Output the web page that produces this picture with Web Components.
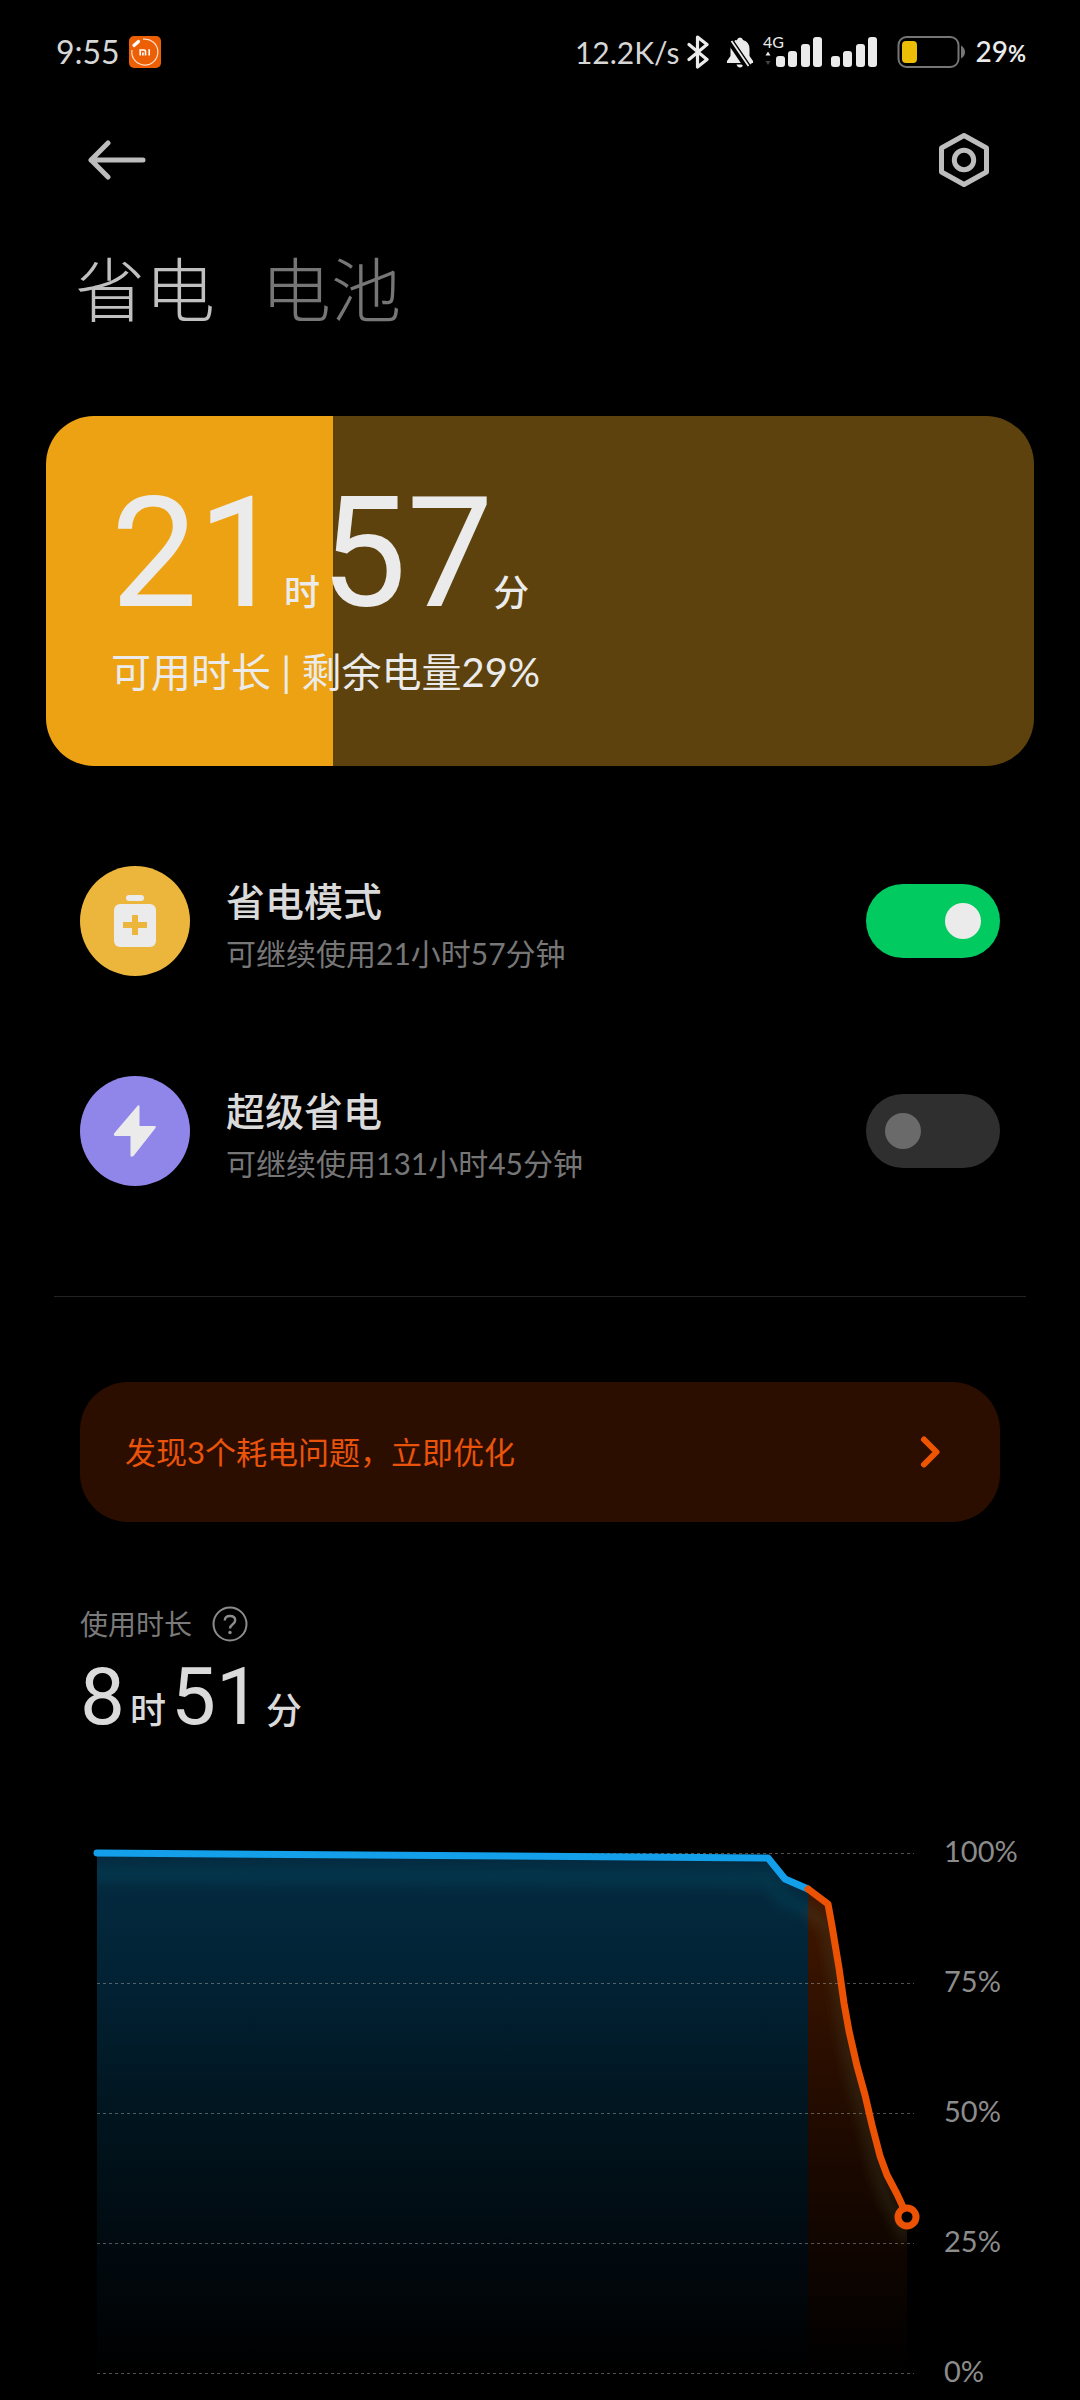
<!DOCTYPE html>
<html lang="zh-CN">
<head>
<meta charset="utf-8">
<meta name="viewport" content="width=device-width, initial-scale=1">
<title>省电</title>
<style>
  html { background: #000; }
  body {
    margin: 0;
    background: #000;
    color: #dadada;
    font-family: Lato, "Noto Sans CJK SC", sans-serif;
  }
</style>
</head>
<body>
<battery-page></battery-page>

<template id="battery-page">
  <style>
    :host { display: block; padding-bottom: 8px; }
    .modes { display: flex; flex-direction: column; gap: 100px; padding: 100px 80px 110px; }
    hr { margin: 0 54px; border: 0; height: 1px; background: #222; }
    main { display: block; }
  </style>
  <status-bar></status-bar>
  <nav-bar></nav-bar>
  <page-tabs></page-tabs>
  <main>
    <battery-card level="29">
      <time-span slot="time" size="large"><span slot="hours">21</span><span slot="minutes">57</span></time-span>
      可用时长 | 剩余电量29%
    </battery-card>
    <div class="modes">
      <power-mode checked>
        <svg slot="icon" width="110" height="110" viewBox="0 0 110 110" aria-hidden="true">
          <circle cx="55" cy="55" r="55" fill="#ecb63c"/>
          <rect x="46" y="29" width="18" height="6" rx="3" fill="#ebebeb"/>
          <rect x="34" y="38" width="42" height="43" rx="6" fill="#ebebeb"/>
          <path d="M55 49v20M43 59h24" stroke="#ecb63c" stroke-width="6" fill="none"/>
        </svg>
        <span slot="name">省电模式</span>
        <span slot="detail">可继续使用21小时57分钟</span>
      </power-mode>
      <power-mode>
        <svg slot="icon" width="110" height="110" viewBox="0 0 110 110" aria-hidden="true">
          <circle cx="55" cy="55" r="55" fill="#9086ea"/>
          <path d="M57 30.500Q58.500 28.500 59.500 30V50H75Q76.500 50.500 75.500 52L53.500 80Q51.500 81.500 50.500 80V60H35Q33 59 34 57.500Z" fill="#ebebeb"/>
        </svg>
        <span slot="name">超级省电</span>
        <span slot="detail">可继续使用131小时45分钟</span>
      </power-mode>
    </div>
    <hr>
    <issue-banner>发现3个耗电问题，立即优化</issue-banner>
    <usage-summary>
      使用时长
      <time-span slot="time"><span slot="hours">8</span><span slot="minutes">51</span></time-span>
    </usage-summary>
    <battery-chart></battery-chart>
  </main>
</template>

<template id="status-bar">
  <style>
    :host { display: flex; align-items: center; justify-content: space-between; height: 104px; padding: 0 54px 0 56px; font-size: 32px; line-height: 40px; color: #d6d6d6; }
    div { display: flex; align-items: center; }
    svg { display: block; flex: none; }
    .time { gap: 9px; }
    .speed { font-size: 30px; }
    .bt { margin-left: 8px; }
    .bell { margin-left: 17px; }
    .sig { margin-left: 8px; }
    .bat { margin-left: 19px; margin-right: 8px; }
    .level { display: flex; align-items: baseline; font-size: 28px; font-weight: 500; color: #ebebeb; }
    .level small { font-size: 22px; font-weight: 700; }
  </style>
  <div class="time">
    <span>9:55</span>
    <svg width="32" height="32" viewBox="0 0 32 32" aria-hidden="true">
      <rect width="32" height="32" rx="5" fill="#ec5f04"/>
      <path d="M14 3.200A13 13 0 1 1 3 14" fill="none" stroke="#fbe0cc" stroke-width="1.200"/>
      <path d="M5 9.500L9.500 5.500" stroke="#fff" stroke-width="3.200" stroke-linecap="round"/>
      <path d="M11.200 19.500V14H15Q16.500 14 16.500 15.500V19.500M13.900 16.500V19.500M20.200 13.300V19.500" fill="none" stroke="#fff" stroke-width="1.600"/>
    </svg>
  </div>
  <div>
    <span class="speed">12.2K/s</span>
    <svg class="bt" width="22" height="36" viewBox="0 0 22 36" aria-label="蓝牙">
      <path d="M2 10.500L20 25.500L10.500 33V3L20 10.500L2 25.500" fill="none" stroke="#ebebeb" stroke-width="3.200" stroke-linejoin="round" stroke-linecap="round"/>
    </svg>
    <svg class="bell" width="28" height="32" viewBox="0 0 28 32" aria-label="静音">
      <path d="M14 1.500Q16.500 1.500 17 4Q23.500 6 23.500 13V20L27 25V27H1V25L4.500 20V13Q4.500 6 11 4Q11.500 1.500 14 1.500ZM10.500 28.500H17.500Q16.500 31.500 14 31.500Q11.500 31.500 10.500 28.500Z" fill="#ebebeb"/>
      <path d="M3.500 3L23 32" stroke="#000" stroke-width="8"/>
      <path d="M5.500 5L22.500 30M9 4.500L25 28" stroke="#ebebeb" stroke-width="1.800"/>
    </svg>
    <svg class="sig" width="61" height="50" viewBox="0 -8 61 50" aria-label="4G">
      <text x="1" y="13" font-size="16" fill="#ebebeb">4G</text>
      <path d="M3.500 20.500L6 16.500L8.500 20.500Z" fill="#ebebeb"/>
      <path d="M3.500 26L6 30L8.500 26Z" fill="#444"/>
      <g fill="#ebebeb">
        <rect x="14" y="21" width="9" height="11" rx="3"/><rect x="26" y="16" width="9" height="16" rx="3"/>
        <rect x="39" y="9" width="9" height="23" rx="3"/><rect x="51" y="2" width="9" height="30" rx="3"/>
      </g>
    </svg>
    <svg class="sig" width="47" height="34" viewBox="0 0 47 34" aria-label="信号">
      <g fill="#ebebeb">
        <rect x="0" y="21" width="9" height="11" rx="3"/><rect x="12" y="16" width="9" height="16" rx="3"/>
        <rect x="25" y="9" width="9" height="23" rx="3"/><rect x="37" y="2" width="9" height="30" rx="3"/>
      </g>
    </svg>
    <svg class="bat" width="70" height="32" viewBox="0 0 70 32" aria-hidden="true">
      <rect x="1.500" y="1" width="60" height="30" rx="8" fill="none" stroke="#757575" stroke-width="2"/>
      <path d="M64 9.500Q68 12 68 16Q68 20 64 22.500Z" fill="#757575"/>
      <rect x="5" y="5" width="15" height="22" rx="4" fill="#ecbe05"/>
    </svg>
    <span class="level">29<small>%</small></span>
  </div>
</template>

<template id="nav-bar">
  <style>
    :host { display: flex; align-items: center; justify-content: space-between; height: 112px; padding: 0 88px; }
    button { display: block; padding: 0; border: 0; background: none; color: #bdbdbd; }
    svg { display: block; fill: none; stroke: currentColor; stroke-width: 5; stroke-linecap: round; stroke-linejoin: round; }
  </style>
  <button aria-label="返回"><svg width="58" height="56" viewBox="0 0 58 56"><path d="M55 28H3M20 11L3 28L20 45"/></svg></button>
  <button aria-label="设置"><svg width="56" height="56" viewBox="0 0 56 56"><path d="M28 3.500L50.500 16V40L28 52.500L5.500 40V16Z"/><circle cx="28" cy="28" r="9.700"/></svg></button>
</template>

<template id="page-tabs">
  <style>
    :host { display: flex; align-items: center; gap: 46px; height: 148px; padding: 0 75px; }
    button { padding: 0; border: 0; background: none; font: inherit; font-size: 70px; line-height: 100px; font-weight: 200; color: #767676; }
    button[aria-selected="true"] { color: #c0c0c0; }
  </style>
  <button role="tab" aria-selected="true">省电</button>
  <button role="tab" aria-selected="false">电池</button>
</template>

<template id="time-span">
  <style>
    :host { display: flex; align-items: baseline; font-family: Roboto, "Noto Sans CJK SC", sans-serif; font-size: 80px; line-height: 80px; }
    small { font-size: 36px; line-height: 36px; font-weight: 500; margin: 0 5px; }
    :host([size="large"]) { font-size: 154px; line-height: 156px; }
    :host([size="large"]) small { margin: 0; }
  </style>
  <slot name="hours"></slot><small>时</small><slot name="minutes"></slot><small>分</small>
</template>

<template id="battery-card">
  <style>
    :host {
      display: flex; flex-direction: column; justify-content: center; gap: 10px; box-sizing: border-box;
      min-height: 350px; margin: 52px 46px 0; padding: 0 65px 4px; border-radius: 48px; color: #ebebeb;
      background: linear-gradient(90deg, #eda213 var(--level), #5d420d var(--level));
      font-size: 40px; line-height: 60px;
    }
  </style>
  <slot name="time"></slot>
  <div><slot></slot></div>
</template>

<template id="power-mode">
  <style>
    :host { display: flex; align-items: center; gap: 36px; height: 110px; }
    ::slotted(svg) { display: block; flex: none; }
    label { flex: 1; display: flex; flex-direction: column; padding-top: 8px; font-size: 39px; line-height: 56px; font-weight: 500; color: #dadada; }
    label span { font-size: 30px; line-height: 48px; font-weight: 400; color: #767676; }
    input { appearance: none; display: flex; align-items: center; flex: none; box-sizing: border-box; width: 134px; height: 74px; margin: 0; padding: 0 19px; border-radius: 37px; background: #2f2f2f; }
    input::before { content: ""; width: 36px; height: 36px; border-radius: 50%; background: #6a6a6a; }
    input:checked { background: #00ca60; justify-content: flex-end; }
    input:checked::before { background: #ebebeb; }
  </style>
  <slot name="icon"></slot>
  <label for="toggle"><slot name="name"></slot><span><slot name="detail"></slot></span></label>
  <input type="checkbox" role="switch" id="toggle">
</template>

<template id="issue-banner">
  <style>
    :host { display: block; margin: 85px 80px 0; }
    a { display: flex; align-items: center; justify-content: space-between; height: 140px; padding: 0 56px 0 45px; border-radius: 48px; background: #2b0e00; color: #e9530b; font-size: 31px; line-height: 48px; text-decoration: none; }
    svg { display: block; flex: none; }
  </style>
  <a href="#optimize"><slot></slot>
    <svg width="28" height="34" viewBox="0 0 28 34" aria-hidden="true"><path d="M8 4.500L20.500 17L8 29.500" fill="none" stroke="#ed5500" stroke-width="6" stroke-linecap="round" stroke-linejoin="round"/></svg>
  </a>
</template>

<template id="usage-summary">
  <style>
    :host { display: block; margin: 84px 80px 0; }
    .title { display: flex; align-items: center; gap: 20px; height: 36px; font-size: 28px; line-height: 36px; color: #7a7a7a; }
    button { padding: 0; border: 0; background: none; color: #8c8c8c; }
    svg { display: block; }
    .time { margin: 10px 0 89px; height: 90px; display: flex; align-items: center; }
  </style>
  <div class="title"><span><slot></slot></span>
    <button aria-label="说明"><svg width="36" height="36" viewBox="0 0 36 36" fill="none" stroke="currentColor"><circle cx="18" cy="18" r="16.500" stroke-width="2"/><path d="M12.800 14.500Q12.800 10 18 10Q23.200 10 23.200 14.300Q23.200 16.500 20.500 18.500Q18 20.300 18 22.500" stroke-width="2.400"/><circle cx="18" cy="26.500" r="1.700" fill="currentColor" stroke="none"/></svg></button>
  </div>
  <div class="time"><slot name="time"></slot></div>
</template>

<template id="battery-chart">
  <style>
    :host { display: flex; padding: 0 54px 0 90px; }
    svg { display: block; flex: 1; min-width: 0; height: auto; }
    ol { flex: none; width: 82px; margin: 0 0 0 22px; padding: 0; list-style: none; display: flex; flex-direction: column; justify-content: space-between; font-size: 29px; line-height: 40px; color: #8c8c8c; }
  </style>
  <svg width="832" height="560" viewBox="0 0 832 560" role="img" aria-label="电量曲线">
    <defs>
      <linearGradient id="blue" gradientUnits="userSpaceOnUse" x1="0" y1="22" x2="0" y2="542">
        <stop offset="0" stop-color="#042c42"/><stop offset=".25" stop-color="#022234"/><stop offset=".5" stop-color="#01151f"/><stop offset=".75" stop-color="#010a10"/><stop offset="1" stop-color="#000"/>
      </linearGradient>
      <linearGradient id="orange" gradientUnits="userSpaceOnUse" x1="0" y1="58" x2="0" y2="542">
        <stop offset="0" stop-color="#421700"/><stop offset=".5" stop-color="#1f0a00"/><stop offset="1" stop-color="#000"/>
      </linearGradient>
      <clipPath id="area"><path d="M7 22L678 27L695 48L718 58L738 73L742 95L749 137L754 172L759 200L767 235L775 264L782 294L790 325L797 344L807 363L813 376L817 386V542H7Z"/></clipPath>
      <filter id="soft" filterUnits="userSpaceOnUse" x="-40" y="-40" width="912" height="640"><feGaussianBlur stdDeviation="6"/></filter>
    </defs>
    <path d="M7 22L678 27L695 48L718 58V542H7Z" fill="url(#blue)"/>
    <path d="M718 58L738 73L742 95L749 137L754 172L759 200L767 235L775 264L782 294L790 325L797 344L807 363L813 376L817 386V542H718Z" fill="url(#orange)"/>
    <g clip-path="url(#area)"><g filter="url(#soft)" fill="none" stroke-width="14">
      <path d="M-10 43L678 48L695 69L718 79" stroke="#0b6a80" stroke-opacity=".18"/>
      <path d="M718 79L738 96L742 118L749 160L754 195L759 223L767 258L775 287L782 317L790 348L797 367L807 386L817 409" stroke="#4f5830" stroke-opacity=".25"/>
    </g></g>
    <path d="M7 22.500H824M7 152.500H824M7 282.500H824M7 412.500H824M7 542.500H824" stroke="#b4b4b4" stroke-opacity=".45" stroke-width="1" stroke-dasharray="3 3"/>
    <g fill="none" stroke-width="7" stroke-linejoin="round" stroke-linecap="round">
      <path d="M7 22L678 27L695 48L718 58" stroke="#149feb"/>
      <path d="M718 58L738 73L742 95L749 137L754 172L759 200L767 235L775 264L782 294L790 325L797 344L807 363L813 376" stroke="#ec5204"/>
    </g>
    <circle cx="817" cy="386" r="9" fill="#000" stroke="#ec5204" stroke-width="7"/>
  </svg>
  <ol><li>100%</li><li>75%</li><li>50%</li><li>25%</li><li>0%</li></ol>
</template>

<script>
  class TemplateElement extends HTMLElement {
    constructor() {
      super();
      const template = document.getElementById(this.localName);
      this.attachShadow({ mode: "open" }).append(document.importNode(template.content, true));
    }
  }

  class BatteryCard extends TemplateElement {
    connectedCallback() {
      this.style.setProperty("--level", this.getAttribute("level") + "%");
    }
  }

  class PowerMode extends TemplateElement {
    connectedCallback() {
      this.shadowRoot.querySelector("input").checked = this.hasAttribute("checked");
    }
  }

  customElements.define("status-bar", class extends TemplateElement {});
  customElements.define("nav-bar", class extends TemplateElement {});
  customElements.define("page-tabs", class extends TemplateElement {});
  customElements.define("time-span", class extends TemplateElement {});
  customElements.define("battery-card", BatteryCard);
  customElements.define("power-mode", PowerMode);
  customElements.define("issue-banner", class extends TemplateElement {});
  customElements.define("usage-summary", class extends TemplateElement {});
  customElements.define("battery-chart", class extends TemplateElement {});
  customElements.define("battery-page", class extends TemplateElement {});
</script>
</body>
</html>
